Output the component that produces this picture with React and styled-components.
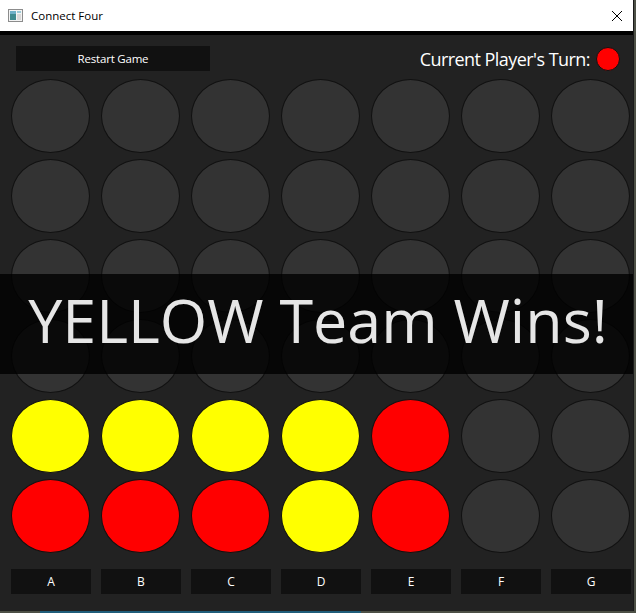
import React from 'react';
import styled, { createGlobalStyle } from 'styled-components';

const EMPTY = null;
const board = [
  [EMPTY, EMPTY, EMPTY, EMPTY, EMPTY, EMPTY, EMPTY],
  [EMPTY, EMPTY, EMPTY, EMPTY, EMPTY, EMPTY, EMPTY],
  [EMPTY, EMPTY, EMPTY, EMPTY, EMPTY, EMPTY, EMPTY],
  [EMPTY, EMPTY, EMPTY, EMPTY, EMPTY, EMPTY, EMPTY],
  ['Y', 'Y', 'Y', 'Y', 'R', EMPTY, EMPTY],
  ['R', 'R', 'R', 'Y', 'R', EMPTY, EMPTY],
];

const columns = ['A', 'B', 'C', 'D', 'E', 'F', 'G'];

const discColors = {
  R: '#ff0000',
  Y: '#ffff00',
};

const GlobalStyle = createGlobalStyle`
  html, body {
    margin: 0;
    padding: 0;
    background: #4d5046;
    font-family: "Open Sans", "Noto Sans", sans-serif;
  }
  * {
    box-sizing: border-box;
  }
`;

export default function App() {
  return (
    <>
      <GlobalStyle />
      <Desktop>
        <Window>
          <TitleBar>
            <AppIcon />
            <WindowTitle>Connect Four</WindowTitle>
            <CloseButton>
              <svg width="12" height="12" viewBox="0 0 12 12">
                <path d="M1 1 L11 11 M11 1 L1 11" stroke="#000" strokeWidth="1" />
              </svg>
            </CloseButton>
          </TitleBar>
          <Content>
            <TopBar>
              <ActionButton>Restart Game</ActionButton>
              <TurnInfo>
                Current Player's Turn:
                <TurnDisc color={discColors.R} />
              </TurnInfo>
            </TopBar>
            <Board>
              {board.map((row, r) =>
                row.map((cell, c) => (
                  <Slot key={`${r}-${c}`} color={cell ? discColors[cell] : undefined} />
                ))
              )}
            </Board>
            <ColumnRow>
              {columns.map((col) => (
                <ColumnButton key={col}>{col}</ColumnButton>
              ))}
            </ColumnRow>
            <WinBanner>YELLOW Team Wins!</WinBanner>
          </Content>
        </Window>
        <TaskbarHint />
      </Desktop>
    </>
  );
}

const AppIcon = () => (
  <svg width="15" height="13" viewBox="0 0 15 13">
    <rect x="0.5" y="0.5" width="14" height="12" fill="#f4f4f4" stroke="#8c8c8c" />
    <rect x="2" y="2" width="6" height="9" fill="#3f8a8f" />
    <rect x="2" y="2" width="6" height="3" fill="#6fb0c8" />
    <rect x="9" y="2" width="4" height="2" fill="#9ccbd8" />
    <rect x="9" y="5" width="4" height="6" fill="#d9d9d9" />
  </svg>
);

const Desktop = styled.div`
  width: 636px;
  height: 613px;
  position: relative;
  overflow: hidden;
`;

const Window = styled.div`
  width: 634px;
  height: 611px;
  display: flex;
  flex-direction: column;
  background: #222222;
  border-right: 1px solid #1a1a1a;
  overflow: hidden;
`;

const TitleBar = styled.div`
  height: 35px;
  flex: none;
  background: #ffffff;
  border-bottom: 4px solid #000000;
  display: flex;
  align-items: center;
  padding: 0 10px 0 8px;
  svg {
    display: block;
  }
`;

const WindowTitle = styled.span`
  margin-left: 8px;
  font-family: "Open Sans", sans-serif;
  font-size: 11.5px;
  color: #000000;
  flex: 1;
`;

const CloseButton = styled.div`
  width: 12px;
  height: 12px;
`;

const Content = styled.div`
  flex: 1;
  position: relative;
  display: flex;
  flex-direction: column;
  background: #222222;
`;

const TopBar = styled.div`
  height: 44px;
  flex: none;
  display: flex;
  justify-content: space-between;
  align-items: flex-start;
  padding: 11px 13px 0 16px;
`;

const ActionButton = styled.div`
  width: 194px;
  height: 25px;
  background: #111111;
  color: #ffffff;
  font-size: 11.5px;
  letter-spacing: -0.2px;
  display: flex;
  align-items: center;
  justify-content: center;
`;

const TurnInfo = styled.div`
  display: flex;
  align-items: center;
  gap: 6px;
  color: #ffffff;
  font-size: 18px;
  letter-spacing: -0.55px;
  height: 25px;
`;

const TurnDisc = styled.span`
  width: 24px;
  height: 24px;
  border-radius: 50%;
  background: ${({ color }) => color};
  border: 1px solid #111111;
`;

const Board = styled.div`
  display: grid;
  grid-template-columns: repeat(7, 79px);
  grid-auto-rows: 74px;
  column-gap: 11px;
  row-gap: 6px;
  padding-left: 11px;
`;

const Slot = styled.div`
  border-radius: 50%;
  background: ${({ color }) => color || '#333333'};
  border: 1px solid #111111;
`;

const ColumnRow = styled.div`
  display: grid;
  grid-template-columns: repeat(7, 80px);
  column-gap: 10px;
  padding-left: 11px;
  margin-top: 16px;
`;

const ColumnButton = styled.div`
  height: 25px;
  background: #111111;
  color: #ffffff;
  font-size: 12px;
  display: flex;
  align-items: center;
  justify-content: center;
`;

const WinBanner = styled.div`
  position: absolute;
  top: 239px;
  left: 0;
  width: 636px;
  height: 100px;
  background: rgba(0, 0, 0, 0.8);
  color: #e6e6e6;
  font-size: 61px;
  display: flex;
  align-items: center;
  justify-content: center;
  padding-bottom: 10px;
`;

const TaskbarHint = styled.div`
  position: absolute;
  left: 40px;
  bottom: 0;
  width: 321px;
  height: 2px;
  background: #1f5d7a;
`;
